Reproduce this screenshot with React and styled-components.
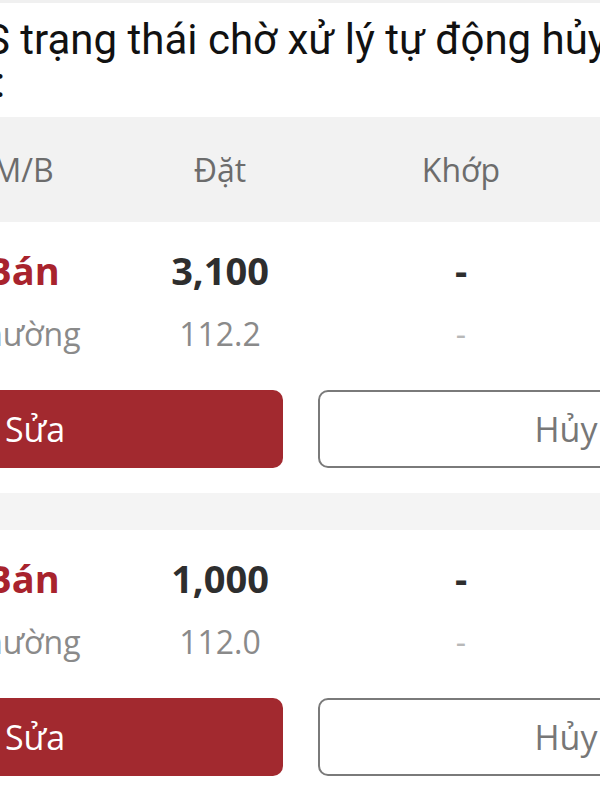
import React from "react";
import styled, { createGlobalStyle } from "styled-components";

const GlobalStyle = createGlobalStyle`
  html, body {
    margin: 0;
    padding: 0;
    background: #ffffff;
  }
  body {
    font-family: "Open Sans", "Liberation Sans", sans-serif;
  }
`;

const Screen = styled.div`
  width: 600px;
  height: 800px;
  overflow: hidden;
  background: #ffffff;
`;

const TopStrip = styled.div`
  height: 3px;
  background: #f0f0f0;
`;

const Notice = styled.div`
  padding-top: 15px;
  height: 114px;
  box-sizing: border-box;
  font-family: Roboto, "Noto Sans", sans-serif;
  font-size: 42px;
  line-height: 43px;
  color: #111111;
  white-space: nowrap;
`;

const NoticeLine = styled.div`
  margin-left: ${(p) => p.shift}px;
`;

const Sheet = styled.div`
  margin-left: -213px;
  width: 1100px;
`;

const Columns = styled.div`
  display: grid;
  grid-template-columns: 160px 234px 248px;
  padding-left: 156px;
  justify-items: center;
  align-items: center;
  white-space: nowrap;
`;

const HeaderBand = styled(Columns)`
  height: 105px;
  background: #f2f2f2;
  font-size: 32px;
  color: #6c6c6c;
`;

const Card = styled.div`
  padding: 18px 0 25px;
`;

const MainRow = styled(Columns)`
  height: 60px;
  font-size: 38px;
  font-weight: 700;
  color: #2e2e2e;
`;

const SubRow = styled(Columns)`
  height: 66px;
  font-size: 32px;
  color: #8a8a8a;
`;

const Side = styled.span`
  color: #a8232d;
`;

const Dash = styled.span`
  color: ${(p) => (p.light ? "#b8b8b8" : "#2e2e2e")};
`;

const Actions = styled.div`
  display: grid;
  grid-template-columns: 496px 496px;
  gap: 35px;
  margin-top: 24px;
`;

const Button = styled.button`
  height: 78px;
  border-radius: 10px;
  font-family: "Open Sans", "Liberation Sans", sans-serif;
  font-size: 34px;
  padding: 0;
  box-sizing: border-box;
  background: ${(p) => (p.primary ? "#a2292f" : "#ffffff")};
  color: ${(p) => (p.primary ? "#ffffff" : "#777777")};
  border: ${(p) => (p.primary ? "none" : "2.5px solid #7a7a7a")};
`;

const Gap = styled.div`
  height: 37px;
  background: #f4f4f4;
`;

const orders = [
  { id: 1, qty: "3,100", price: "112.2" },
  { id: 2, qty: "1,000", price: "112.0" },
];

export default function App() {
  return (
    <Screen>
      <GlobalStyle />
      <TopStrip />
      <Notice>
        <NoticeLine shift={-15}>S trạng thái chờ xử lý tự động hủy</NoticeLine>
        <NoticeLine shift={-5}>:</NoticeLine>
      </Notice>
      <Sheet>
        <HeaderBand>
          <span>M/B</span>
          <span>Đặt</span>
          <span>Khớp</span>
        </HeaderBand>
        {orders.map((o, i) => (
          <React.Fragment key={o.id}>
            {i > 0 && <Gap />}
            <Card>
              <MainRow>
                <Side>Bán</Side>
                <span>{o.qty}</span>
                <Dash>-</Dash>
              </MainRow>
              <SubRow>
                <span>Thường</span>
                <span>{o.price}</span>
                <Dash light>-</Dash>
              </SubRow>
              <Actions>
                <Button primary>Sửa</Button>
                <Button>Hủy</Button>
              </Actions>
            </Card>
          </React.Fragment>
        ))}
      </Sheet>
    </Screen>
  );
}
